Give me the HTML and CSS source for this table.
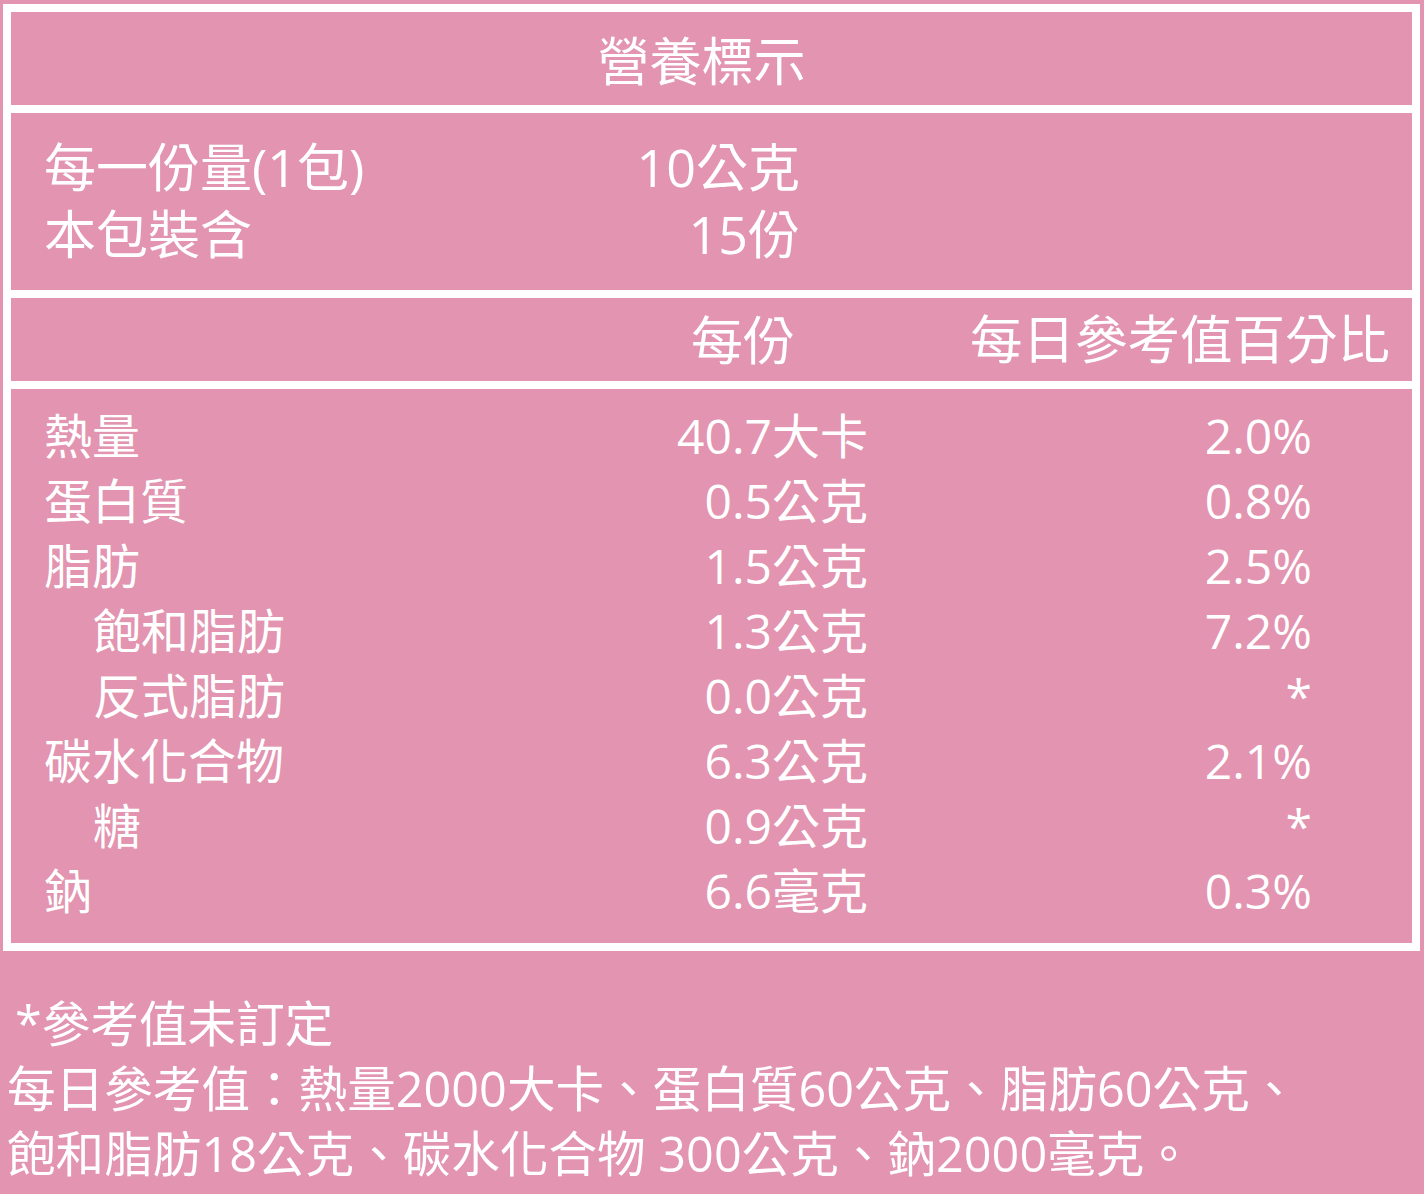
FILE: index.html
```html
<!DOCTYPE html>
<html lang="zh-Hant">
<head>
<meta charset="utf-8">
<title>營養標示</title>
<link rel="stylesheet" href="styles.css">
</head>
<body>
<div class="page">
  <div class="label">
    <div class="sec title">營養標示</div>
    <div class="sec serving">
      <div class="srow"><span class="sname">每一份量(1包)</span><span class="sval">10公克</span></div>
      <div class="srow"><span class="sname">本包裝含</span><span class="sval">15份</span></div>
    </div>
    <div class="sec head">
      <span class="hblank"></span>
      <span class="hper">每份</span>
      <span class="hpct">每日參考值百分比</span>
    </div>
    <div class="sec nutr">
      <div class="row"><span class="n">熱量</span><span class="v">40.7大卡</span><span class="p">2.0%</span></div>
      <div class="row"><span class="n">蛋白質</span><span class="v">0.5公克</span><span class="p">0.8%</span></div>
      <div class="row"><span class="n">脂肪</span><span class="v">1.5公克</span><span class="p">2.5%</span></div>
      <div class="row"><span class="n sub">飽和脂肪</span><span class="v">1.3公克</span><span class="p">7.2%</span></div>
      <div class="row"><span class="n sub">反式脂肪</span><span class="v">0.0公克</span><span class="p">*</span></div>
      <div class="row"><span class="n">碳水化合物</span><span class="v">6.3公克</span><span class="p">2.1%</span></div>
      <div class="row"><span class="n sub">糖</span><span class="v">0.9公克</span><span class="p">*</span></div>
      <div class="row"><span class="n">鈉</span><span class="v">6.6毫克</span><span class="p">0.3%</span></div>
    </div>
  </div>
  <div class="notes">
    <p class="note first">*參考值未訂定</p>
    <p class="note">每日參考值：熱量2000大卡、蛋白質60公克、脂肪60公克、</p>
    <p class="note">飽和脂肪18公克、碳水化合物 300公克、鈉2000毫克。</p>
  </div>
</div>
</body>
</html>
```

FILE: styles.css
```css
html, body {
  margin: 0;
  padding: 0;
  background: #e294b0;
}
body {
  color: #ffffff;
  font-family: "Open Sans", "Noto Sans CJK TC", sans-serif;
  font-weight: 400;
}
.page {
  width: 1424px;
  height: 1194px;
  padding: 4px 0 0 3px;
  box-sizing: border-box;
  overflow: hidden;
}
.label {
  width: 1417px;
  box-sizing: border-box;
  border: 8px solid #ffffff;
}
.sec + .sec {
  border-top: 8px solid #ffffff;
}
.title {
  height: 93px;
  box-sizing: border-box;
  display: flex;
  align-items: center;
  justify-content: center;
  padding: 4px 20px 0 0;
  font-size: 52px;
  line-height: 1;
}
.serving {
  height: 185px;
  box-sizing: border-box;
  padding: 20px 0 0 33px;
  font-size: 52px;
  line-height: 67px;
}
.srow {
  display: grid;
  grid-template-columns: 556px 200px;
}
.sval {
  text-align: right;
}
.head {
  height: 91px;
  box-sizing: border-box;
  display: grid;
  grid-template-columns: 551px 200px 175px auto;
  align-items: center;
  padding: 0 0 0 33px;
  font-size: 52px;
  line-height: 1;
}
.hper {
  text-align: right;
}
.hpct {
  grid-column: 4;
  white-space: nowrap;
  font-size: 52.5px;
}
.nutr {
  height: 562px;
  box-sizing: border-box;
  padding: 14px 100px 0 33px;
  font-size: 48px;
  line-height: 65px;
}
.row {
  display: grid;
  grid-template-columns: 1fr 200px 444px;
}
.n.sub {
  padding-left: 49px;
}
.v, .p {
  text-align: right;
  white-space: nowrap;
}
.notes {
  padding: 40px 0 0 4px;
  font-size: 48.6px;
  line-height: 65px;
}
.note {
  margin: 0;
  white-space: nowrap;
}
.note.first {
  padding-left: 8px;
}
```
